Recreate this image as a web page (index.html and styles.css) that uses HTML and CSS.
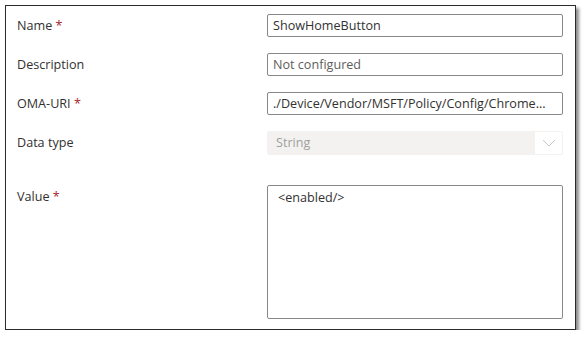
FILE: index.html
```
<!DOCTYPE html>
<html>
<head>
<meta charset="utf-8">
<link rel="stylesheet" href="styles.css">
</head>
<body>
<div class="frame">
  <div class="row">
    <div class="label">Name <span class="req">*</span></div>
    <div class="input">ShowHomeButton</div>
  </div>
  <div class="row">
    <div class="label">Description</div>
    <div class="input placeholder">Not configured</div>
  </div>
  <div class="row">
    <div class="label">OMA-URI <span class="req">*</span></div>
    <div class="input">./Device/Vendor/MSFT/Policy/Config/Chrome...</div>
  </div>
  <div class="row">
    <div class="label">Data type</div>
    <div class="select">
      <span class="select-text">String</span>
      <span class="chev"><svg width="14" height="8" viewBox="0 0 14 8"><path d="M1 1 L7 7 L13 1" fill="none" stroke="#c8c6c4" stroke-width="1"/></svg></span>
    </div>
  </div>
  <div class="row row-value">
    <div class="label label-top">Value <span class="req">*</span></div>
    <div class="textarea">&lt;enabled/&gt;</div>
  </div>
</div>
</body>
</html>
```
FILE: styles.css
```
html, body {
  margin: 0;
  padding: 0;
  background: #ffffff;
}
body {
  font-family: "Open Sans", "Noto Sans", sans-serif;
  font-size: 12.6px;
  color: #323130;
}
.frame {
  margin: 5px 0 0 5px;
  border: 1px solid #2b2b2b;
  box-shadow: 3px 3px 3px rgba(0, 0, 0, 0.45);
  padding: 8px 12px 0 11px;
  box-sizing: border-box;
  width: 571px;
  height: 325px;
  display: flex;
  flex-direction: column;
  gap: 16px;
}
.row {
  display: flex;
  align-items: center;
  height: 23px;
}
.label {
  width: 250px;
  flex: none;
  color: #323130;
}
.req {
  color: #a4262c;
}
.input {
  width: 296px;
  height: 23px;
  box-sizing: border-box;
  border: 1px solid #8a8886;
  border-radius: 2px;
  padding: 0 5px;
  line-height: 21px;
  white-space: nowrap;
  overflow: hidden;
}
.placeholder {
  color: #605e5c;
}
.select {
  width: 296px;
  height: 24px;
  box-sizing: border-box;
  background: #f3f2f1;
  border-radius: 2px;
  display: flex;
  align-items: center;
  justify-content: space-between;
  padding: 0 1px 0 9px;
}
.select-text {
  color: #a19f9d;
}
.chev {
  width: 27px;
  height: 22px;
  background: #ffffff;
  display: flex;
  align-items: center;
  justify-content: center;
}
.row-value {
  height: auto;
  align-items: flex-start;
  margin-top: 15px;
}
.label-top {
  padding-top: 3px;
}
.textarea {
  width: 296px;
  height: 134px;
  box-sizing: border-box;
  border: 1px solid #8a8886;
  border-radius: 2px;
  padding: 3px 10px;
  line-height: 18px;
}
```
